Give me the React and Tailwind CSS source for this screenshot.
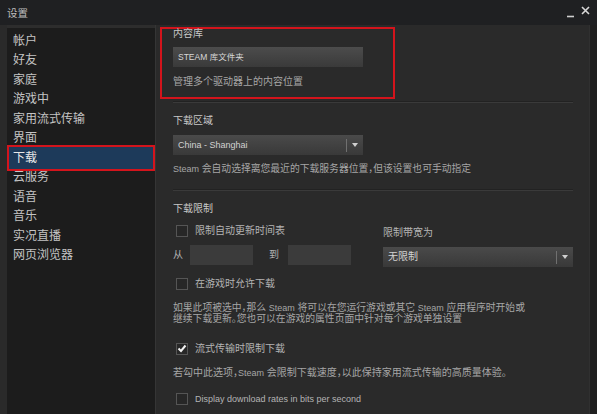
import React from 'react';

const navItems = ['帐户', '好友', '家庭', '游戏中', '家用流式传输', '界面', '下载', '云服务', '语音', '音乐', '实况直播', '网页浏览器'];

// latin words are set a touch smaller than the CJK text around them
const L = ({ children, size = 'text-[9px]' }) => <span className={size}>{children}</span>;

function Checkbox({ checked, label }) {
  return (
    <div className="flex h-[12px] items-center">
      <div className="ml-[3px] flex h-[12px] w-[12px] items-center justify-center border border-[#555] bg-[#272727]">
        {checked && (
          <svg width="10" height="9" viewBox="0 0 10 9">
            <path d="M1.5 4.5 L4 7 L8.5 1.5" fill="none" stroke="#f2f2f2" strokeWidth="2" />
          </svg>
        )}
      </div>
      <span className="ml-[7px] text-[10px] leading-[12px] text-[#b4b4b4]">{label}</span>
    </div>
  );
}

function Dropdown({ children }) {
  return (
    <div className="flex h-[20px] w-[190px] items-center bg-linear-to-b from-[#4a4a4a] to-[#393939] pl-[5px] text-[10px] text-[#d2d2d2]">
      <span className="leading-[12px]">{children}</span>
      <div className="ml-auto flex h-full items-center">
        <span className="h-[13px] w-px bg-[#707070]" />
        <span className="mx-[5px] h-0 w-0 border-x-[3px] border-t-[4px] border-x-transparent border-t-[#cfcfcf]" />
      </div>
    </div>
  );
}

function Separator() {
  return <div className="h-[2px] w-[400px] border-t border-b border-t-[#222] border-b-[#3a3a3a]" />;
}

export default function App() {
  return (
    <div className="flex h-[414px] w-[597px] flex-col overflow-hidden bg-[#282828] font-['Liberation_Sans','Noto_Sans_CJK_SC',sans-serif] [font-feature-settings:'halt']">
      {/* title bar */}
      <div className="flex h-[25px] items-center bg-[#1f2022] pl-[7px] pr-[7px]">
        <span className="text-[10.5px] leading-[12px] text-[#bdbdbd]">设置</span>
        <div className="ml-auto flex items-center gap-[6px]">
          <svg width="8" height="10" viewBox="0 0 8 10">
            <path d="M0 8.5 H7" stroke="#cfcfcf" strokeWidth="1.6" />
          </svg>
          <svg width="9" height="9" viewBox="0 0 9 9" className="-mt-[4px]">
            <path d="M1 1 L8 8 M8 1 L1 8" stroke="#d8d8d8" strokeWidth="1.6" />
          </svg>
        </div>
      </div>

      <div className="flex flex-1">
        <div className="w-[7px] bg-[#2a2a2a]" />

        {/* sidebar */}
        <div className="w-[148px] border-t-[3px] border-[#2d2d2d] bg-[#1c1c1c] px-[2px] pt-[3px]">
          {navItems.map((item) =>
            item === '下载' ? (
              <div
                key={item}
                className="-my-[1.25px] flex h-[22px] items-center bg-[#1d3a5a] pl-[4px] text-[12px] text-[#e8e8e8] outline-2 outline-[#d3141c]"
              >
                {item}
              </div>
            ) : (
              <div key={item} className="flex h-[19.5px] items-center pl-[4px] text-[12px] text-[#c4c4c4]">
                {item}
              </div>
            )
          )}
        </div>
        <div className="w-px bg-[#353535]" />

        {/* settings panel */}
        <div className="flex flex-1 flex-col bg-[#2a2a2a]">
          <div className="ml-[4px] mt-[2px] h-[72px] w-[235px] border-2 border-[#d3141c] pl-[11px]">
            <div className="text-[10px] leading-[10px] text-[#c8c8c8]">内容库</div>
            <div className="mt-[8px] flex h-[20px] w-[190px] items-center bg-linear-to-b from-[#4c4c4c] to-[#3a3a3a] pl-[5px] text-[8.5px] leading-[12px] text-[#d8d8d8]">
              STEAM 库文件夹
            </div>
            <div className="mt-[9px] text-[10px] leading-[12px] text-[#a6a6a6]">管理多个驱动器上的内容位置</div>
          </div>

          <div className="ml-[17px] mt-[2px] flex flex-col">
            <Separator />
            <div className="mt-[12px] text-[10px] leading-[12px] text-[#c8c8c8]">下载区域</div>
            <div className="mt-[8px]">
              <Dropdown>
                <L>China - Shanghai</L>
              </Dropdown>
            </div>
            <div className="mt-[8px] text-[9.8px] leading-[12px] text-[#a6a6a6]">
              <L>Steam</L> 会自动选择离您最近的下载服务器位置，但该设置也可手动指定
            </div>
            <div className="mt-[14px]">
              <Separator />
            </div>
            <div className="mt-[12px] text-[10px] leading-[12px] text-[#c8c8c8]">下载限制</div>

            <div className="flex">
              <div className="w-[210px]">
                <div className="mt-[10px]">
                  <Checkbox label="限制自动更新时间表" />
                </div>
                <div className="mt-[8px] flex h-[20px] items-center text-[10px] text-[#b4b4b4]">
                  <span className="w-[17px] leading-[12px]">从</span>
                  <div className="h-[20px] w-[63px] bg-[#3b3b3b]" />
                  <span className="ml-[16px] w-[19px] leading-[12px]">到</span>
                  <div className="h-[20px] w-[63px] bg-[#3b3b3b]" />
                </div>
              </div>
              <div className="w-[190px]">
                <div className="mt-[12px] text-[10px] leading-[12px] text-[#b4b4b4]">限制带宽为</div>
                <div className="mt-[8px]">
                  <Dropdown>无限制</Dropdown>
                </div>
              </div>
            </div>

            <div className="mt-[11px]">
              <Checkbox label="在游戏时允许下载" />
            </div>
            <p className="mt-[13px] text-[9.8px] leading-[10.5px] text-[#a6a6a6]">
              如果此项被选中，那么 <L>Steam</L> 将可以在您运行游戏或其它 <L>Steam</L> 应用程序时开始或
              <br />
              继续下载更新。您也可以在游戏的属性页面中针对每个游戏单独设置
            </p>
            <div className="mt-[18.5px]">
              <Checkbox checked label="流式传输时限制下载" />
            </div>
            <div className="mt-[12px] text-[10px] leading-[12px] text-[#a6a6a6]">
              若勾中此选项，<L>Steam</L> 会限制下载速度，以此保持家用流式传输的高质量体验。
            </div>
            <div className="mt-[14px]">
              <Checkbox label={<L>Display download rates in bits per second</L>} />
            </div>
          </div>
        </div>

        <div className="w-[8px] border-l border-[#303030] bg-[#1f1f1f]" />
      </div>
    </div>
  );
}
